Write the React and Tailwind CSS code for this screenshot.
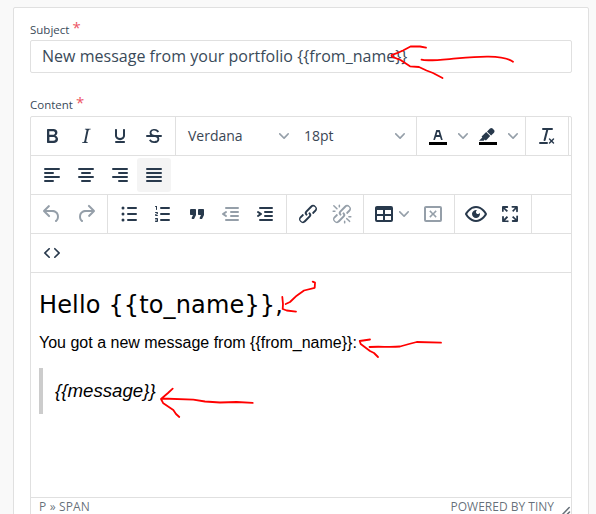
import React from 'react';

const row = (y) => `M5 ${y}h14a1 1 0 010 2H5a1 1 0 010-2z`;
const LINK =
  'M6.2 12.3a1 1 0 011.4 1.4l-2.1 2a2 2 0 102.7 2.8l4.8-4.8a1 1 0 000-1.4 1 1 0 111.4-1.3 2.9 2.9 0 010 4L9.6 20a3.9 3.9 0 01-5.5-5.5l2-2zm11.6-.6a1 1 0 01-1.4-1.4l2-2a2 2 0 10-2.6-2.8L11 10.3a1 1 0 000 1.4A1 1 0 119.6 13a2.9 2.9 0 010-4L14.4 4a3.9 3.9 0 015.5 5.5l-2 2z';
const DENT =
  'M7 5h12a1 1 0 010 2H7a1 1 0 110-2zm5 4h7a1 1 0 010 2h-7a1 1 0 010-2zm0 4h7a1 1 0 010 2h-7a1 1 0 010-2zm-5 4h12a1 1 0 010 2H7a1 1 0 010-2z';

const ICONS = {
  bold: 'M7.8 19c-.3 0-.5 0-.6-.2l-.2-.5V5.7c0-.2 0-.4.2-.5l.6-.2h5c1.5 0 2.7.3 3.5 1 .7.6 1.1 1.4 1.1 2.5a3 3 0 01-.6 1.9c-.4.6-1 1-1.6 1.2.4.1.9.3 1.3.6s.8.7 1 1.2c.4.4.5 1 .5 1.6 0 1.3-.4 2.3-1.3 3-.8.7-2.1 1-3.8 1H7.8zm5-8.3c.6 0 1.2-.1 1.6-.5.4-.3.6-.7.6-1.3 0-1.1-.8-1.7-2.3-1.7H9.3v3.5h3.4zm.5 6c.7 0 1.3-.1 1.7-.4.4-.4.6-.9.6-1.5s-.2-1-.7-1.4c-.4-.3-1-.4-2-.4H9.4v3.8h4z',
  italic:
    'M16.7 4.7l-.1.9h-.3c-.6 0-1 0-1.4.3-.3.3-.4.6-.5 1.1l-2.1 9.8v.6c0 .5.4.8 1.4.8h.2l-.2.8H8l.2-.8h.2c1.1 0 1.8-.5 2-1.5l2-9.8.1-.5c0-.6-.4-.8-1.4-.8h-.3l.2-.9h5.8z',
  underline:
    'M16 5c.6 0 1 .4 1 1v5.5a4 4 0 01-.4 1.8l-1 1.4a5.3 5.3 0 01-5.5 1 5 5 0 01-1.6-1c-.5-.4-.8-.9-1.1-1.4a4 4 0 01-.4-1.8V6c0-.6.4-1 1-1s1 .4 1 1v5.5c0 .3 0 .6.2 1l.6.7a3.3 3.3 0 002.2.8 3.4 3.4 0 002.2-.8c.3-.2.4-.5.6-.8l.2-.9V6c0-.6.4-1 1-1zM8 17h8c.6 0 1 .4 1 1s-.4 1-1 1H8a1 1 0 010-2z',
  strike:
    'M15.6 8.5c-.5-.7-1-1.1-1.3-1.3-.6-.4-1.3-.6-2-.6-2.7 0-2.8 1.7-2.8 2.1 0 1.6 1.8 2 3.2 2.3 4.4.9 4.6 2.8 4.6 3.9 0 1.4-.7 4.1-5 4.1A6.2 6.2 0 017 16.4l1.5-1.1c.4.6 1.6 2 3.7 2 1.6 0 2.5-.4 3-1.2.4-.8.3-2-.8-2.6-.7-.4-1.6-.7-2.9-1-1-.2-3.9-.8-3.9-3.6C7.6 6 10.3 5 12.4 5c2.9 0 4.2 1.6 4.7 2.4l-1.5 1.1z M5 11h14a1 1 0 010 2H5a1 1 0 010-2z',
  alignLeft: `${row(5)}M5 9h8a1 1 0 010 2H5a1 1 0 010-2z${row(13)}M5 17h8a1 1 0 010 2H5a1 1 0 010-2z`,
  alignCenter: `${row(5)}M8 9h8a1 1 0 010 2H8a1 1 0 010-2z${row(13)}M8 17h8a1 1 0 010 2H8a1 1 0 010-2z`,
  alignRight: `${row(5)}M11 9h8a1 1 0 010 2h-8a1 1 0 010-2z${row(13)}M11 17h8a1 1 0 010 2h-8a1 1 0 010-2z`,
  justify: row(5) + row(9) + row(13) + row(17),
  undo: 'M6.4 8H12c3.7 0 6.2 2 6.8 5.1.6 2.7-.4 5.6-2.3 6.8a1 1 0 01-1-1.8c1.1-.6 1.8-2.7 1.4-4.6-.5-2.1-2.1-3.5-4.9-3.5H6.4l3.3 3.3a1 1 0 11-1.4 1.4l-5-5a1 1 0 010-1.4l5-5a1 1 0 011.4 1.4L6.4 8z',
  redo: 'M17.6 10H12c-2.8 0-4.4 1.4-4.9 3.5-.4 2 .3 4 1.4 4.6a1 1 0 11-1 1.8c-2-1.2-2.9-4.1-2.3-6.8.6-3 3-5.1 6.8-5.1h5.6l-3.3-3.3a1 1 0 111.4-1.4l5 5a1 1 0 010 1.4l-5 5a1 1 0 01-1.4-1.4l3.3-3.3z',
  bullets:
    'M11 5h8a1 1 0 010 2h-8a1 1 0 010-2zm0 6h8a1 1 0 010 2h-8a1 1 0 010-2zm0 6h8a1 1 0 010 2h-8a1 1 0 010-2zM4.5 6a1.5 1.5 0 113 0 1.5 1.5 0 01-3 0zm0 6a1.5 1.5 0 113 0 1.5 1.5 0 01-3 0zm0 6a1.5 1.5 0 113 0 1.5 1.5 0 01-3 0z',
  numbers:
    'M10 17h8a1 1 0 010 2h-8a1 1 0 010-2zm0-6h8a1 1 0 010 2h-8a1 1 0 010-2zm0-6h8a1 1 0 010 2h-8a1 1 0 110-2zM6 4v3.5c0 .3-.2.5-.5.5a.5.5 0 01-.5-.5V5h-.5a.5.5 0 010-1H6zm-1 8.8l.2.2h1.3c.3 0 .5.2.5.5s-.2.5-.5.5H4.900a1 1 0 01-.9-1V13c0-.4.3-.8.6-1l1.2-.4.2-.3a.2.2 0 00-.2-.2H4.500a.5.5 0 01-.5-.5c0-.3.2-.5.5-.5h1.600c.5 0 .9.4.9 1v.1c0 .4-.3.8-.6 1l-1.200.4-.2.3zM7 17v2c0 .6-.4 1-1 1H4.500a.5.5 0 010-1h1.200c.2 0 .3-.1.3-.3 0-.2-.1-.3-.3-.3H4.400a.4.4 0 110-.8h1.300c.2 0 .3-.1.3-.3 0-.2-.1-.3-.3-.3H4.500a.5.5 0 110-1H6c.6 0 1 .4 1 1z',
  quote:
    'M7.5 17h.9c.4 0 .7-.2.9-.6L11 13V8c0-.6-.4-1-1-1H6a1 1 0 00-1 1v4c0 .6.4 1 1 1h2l-1.3 2.7a1 1 0 00.8 1.3zm8 0h.9c.4 0 .7-.2.9-.6L19 13V8c0-.6-.4-1-1-1h-4a1 1 0 00-1 1v4c0 .6.4 1 1 1h2l-1.3 2.7a1 1 0 00.8 1.3z',
  outdent: `${DENT}M7.6 13.2a1 1 0 01-1.200 1.600l-3-2a1 1 0 010-1.600l3-2a1 1 0 011.200 1.600L5.800 12l1.800 1.200z`,
  indent: `${DENT}M4.4 13.2L6.2 12l-1.8-1.2a1 1 0 011.2-1.6l3 2a1 1 0 010 1.6l-3 2a1 1 0 11-1.2-1.6z`,
  link: LINK,
  unlink: `${LINK}M7.6 6.3a.8.8 0 01-1 1.1L3.3 4.2a.7.7 0 111-1l3.2 3.1zM5.1 8.6a.8.8 0 010 1.5H3a.8.8 0 010-1.5H5zm5-3.5a.8.8 0 01-1.5 0V3a.8.8 0 011.5 0V5zm6 11.8a.8.8 0 011-1l3.2 3.2a.8.8 0 01-1 1L16 17zm-2.2 2a.8.8 0 011.5 0V21a.8.8 0 01-1.5 0V19zm5-3.5a.7.7 0 110-1.5H21a.8.8 0 010 1.5H19z`,
  table:
    'M19 4a2 2 0 012 2v12a2 2 0 01-2 2H5a2 2 0 01-2-2V6c0-1.1.9-2 2-2h14zM5 14v4h6v-4H5zm14 0h-6v4h6v-4zm0-6h-6v4h6V8zM5 12h6V8H5v4z',
  tableDelete:
    'M19 4a2 2 0 012 2v12a2 2 0 01-2 2H5a2 2 0 01-2-2V6c0-1.1.9-2 2-2h14zm0 2H5v12h14V6zm-4.400 2.300l1.100 1.100L13.100 12l2.600 2.600-1.100 1.100-2.600-2.600-2.600 2.600-1.100-1.100 2.600-2.600-2.600-2.600 1.100-1.100 2.600 2.600 2.600-2.600z',
  preview:
    'M3.5 12.5c.5.8 1.1 1.6 1.8 2.3 2 2 4.2 3.2 6.7 3.2s4.7-1.2 6.7-3.2a16.2 16.2 0 002.1-2.8 15.7 15.7 0 00-2.1-2.8c-2-2-4.2-3.2-6.7-3.2a9.3 9.3 0 00-6.7 3.2A16.2 16.2 0 003.2 12c0 .2.2.3.3.5zm-2.4-1l.7-1.2L4 7.8C6.2 5.4 8.9 4 12 4c3 0 5.8 1.4 8.1 3.8a18.2 18.2 0 012.8 3.7v1l-.7 1.2-2.1 2.5c-2.3 2.4-5 3.8-8.1 3.8-3 0-5.8-1.4-8.1-3.8a18.2 18.2 0 01-2.8-3.7 1 1 0 010-1zm12-3.3a2 2 0 102.7 2.6 4 4 0 11-2.6-2.6z',
  fullscreen:
    'M15.3 10l-1.2-1.3 2.9-3h-2.3a.9.9 0 110-1.7H19c.5 0 .9.4.9.9v4.4a.9.9 0 11-1.8 0V7l-2.9 3zm0 4l3 3v-2.3a.9.9 0 111.7 0V19c0 .5-.4.9-.9.9h-4.4a.9.9 0 110-1.8H17l-3-2.9 1.3-1.2zM10 15.4l-2.9 3h2.3a.9.9 0 110 1.7H5a.9.9 0 01-.9-.9v-4.4a.9.9 0 111.8 0V17l2.9-3 1.2 1.3zM8.7 10L5.7 7v2.3a.9.9 0 01-1.7 0V5c0-.5.4-.9.9-.9h4.4a.9.9 0 010 1.8H7l3 2.9-1.3 1.2z',
  code: 'M9.8 15.7c.3.3.3.8 0 1-.3.4-.9.4-1.2 0l-4.4-4.1a.8.8 0 010-1.2l4.4-4.2c.3-.3.9-.3 1.2 0 .3.3.3.8 0 1.1L6 12l3.8 3.7zM14.2 15.7c-.3.3-.3.8 0 1 .4.4.9.4 1.2 0l4.4-4.1c.3-.3.3-.9 0-1.2l-4.4-4.2a.8.8 0 00-1.2 0c-.3.3-.3.8 0 1.1L18 12l-3.8 3.7z',
  clear:
    'M13.2 6a1 1 0 010 .2l-2.6 10a1 1 0 01-1 .8h-.2a.8.8 0 01-.8-1l2.6-10H8a1 1 0 110-2h9a1 1 0 010 2h-3.8zM5 18h7a1 1 0 010 2H5a1 1 0 010-2zm13 1.5L16.5 18 15 19.5a.7.7 0 01-1-1l1.5-1.5-1.5-1.5a.7.7 0 011-1l1.5 1.5 1.5-1.5a.7.7 0 011 1L17.5 17l1.5 1.5a.7.7 0 01-1 1z',
  textColor:
    'M8.7 16h-.8a.5.5 0 01-.5-.6l2.7-9c.1-.3.3-.4.5-.4h2.8c.2 0 .4.1.5.4l2.7 9a.5.5 0 01-.5.6h-.8a.5.5 0 01-.4-.4l-.7-2.2c0-.3-.3-.4-.5-.4h-3.4c-.2 0-.4.1-.5.4l-.7 2.2c0 .3-.2.4-.4.4zm2.6-7.6l-.6 2a.5.5 0 00.5.6h1.6a.5.5 0 00.5-.6l-.6-2c0-.3-.3-.4-.5-.4h-.4c-.2 0-.4.1-.5.4z',
  highlight:
    'M7.7 16.7H3l3.3-3.3-.7-.8L10.2 8l4 4.1-4 4.2c-.2.2-.6.2-.8 0l-.6-.7-1.1 1.1zm5-7.5L11 7.4l3-2.9a2 2 0 012.6 0L18 6c.7.7.7 2 0 2.7l-2.9 2.9-1.8-1.8-.5-.6z',
};

function Icon({ name, bar }) {
  return (
    <svg width="24" height="24" viewBox="0 0 24 24" className="shrink-0">
      {bar && <path d="M3 18h18v3H3z" fill="#000" />}
      <path d={ICONS[name]} fill="currentColor" fillRule={name === 'strike' ? 'nonzero' : 'evenodd'} />
    </svg>
  );
}

function Chevron() {
  return (
    <svg width="10" height="10" viewBox="0 0 10 10" className="shrink-0 text-[#959fa9]">
      <path
        d="M8.7 2.2c.3-.3.8-.3 1 0 .4.4.4.9 0 1.2L5.7 7.8c-.3.3-.9.3-1.2 0L.2 3.4a.8.8 0 010-1.2c.3-.3.8-.3 1.1 0L5 6l3.7-3.8z"
        fill="currentColor"
      />
    </svg>
  );
}

function Button({ name, disabled, active }) {
  return (
    <div
      className={`flex h-[34px] w-[34px] items-center justify-center rounded-[3px] ${
        disabled ? 'text-[#959fa9]' : 'text-[#28394c]'
      } ${active ? 'bg-[#f4f4f4]' : ''}`}
    >
      <Icon name={name} />
    </div>
  );
}

function ColorButton({ name }) {
  return (
    <div className="flex h-[34px] w-[50px] items-center pl-[5px] text-[#28394c]">
      <Icon name={name} bar />
      <div className="ml-2">
        <Chevron />
      </div>
    </div>
  );
}

function Group({ children, last }) {
  return (
    <div className={`flex h-full px-1 pt-[2px] ${last ? '' : 'border-r border-[#e0e0e0]'}`}>{children}</div>
  );
}

function Toolbar({ children }) {
  return <div className="flex h-[39px] border-b border-[#e0e0e0]">{children}</div>;
}

function Label({ children }) {
  return (
    <div className="flex h-[16px] items-center text-[11.5px] leading-[16px] text-[#3a4a59]">
      <span>{children}</span>
      <span className="-mt-[7px] ml-[3px] text-[15px] leading-[16px] text-[#ed5565]">*</span>
    </div>
  );
}

function Marks() {
  return (
    <svg
      className="pointer-events-none absolute left-0 top-0"
      width="596"
      height="514"
      fill="none"
      stroke="#ff0000"
      strokeWidth="1.8"
      strokeLinecap="round"
      strokeLinejoin="round"
    >
      <path d="M426 47.7L420 46.5H410.5L403 50.5Q397 53.5 392 54.8Q390.500 56 393 57.200L400.500 60L410 66.300L419 67L426.500 70.500L433 73L442.500 78" />
      <path d="M421.500 59.700C427 61.300 436 60.200 456.500 58.400S503 54.500 513 61.700" />
      <path d="M312.700 281.700L315 282.700L314.700 287.800L304 290.500L296.700 295.700L290 302L285.700 304M282.300 297L283 304L282.700 309L286.700 310.500L296 311.700" />
      <path d="M370 339.500L359.700 341L360.700 344L370 351L374 353L378 357M369.500 347C380 346.200 390 347.500 400 346.500L409 344L416.700 342L441 342.700" />
      <path d="M172.700 388.700L168 393L161 399L163.300 403.300L173.300 410L176 414L179.300 417M161.700 398.500L193.300 399.700L205 401.500L220 402.500L236.700 402L252.700 402.900" />
    </svg>
  );
}

export default function App() {
  return (
    <div className="relative h-[514px] w-[596px] overflow-hidden bg-[#f9f9f9] pl-[13px] pt-[7px] font-['Open_Sans',sans-serif]">
      <div className="flex h-[520px] w-[576px] flex-col rounded-[2px] border border-[#e0e0e0] bg-white px-4 pt-[14px]">
        <Label>Subject</Label>
        <div className="mt-[2px] flex h-[33px] w-[542px] items-center rounded-[2px] border border-[#e0e0e0] pb-[2px] pl-[11px] text-[16px] tracking-[0.02px] text-[#3a4a59]">
          <span className="whitespace-nowrap">New message from your portfolio {'{{from_name}}'}</span>
        </div>
        <div className="mt-[24px]">
          <Label>Content</Label>
        </div>
        <div className="mt-[3px] flex h-[402px] w-[542px] flex-col rounded-[2px] border border-[#e0e0e0]">
          <Toolbar>
            <Group>
              <Button name="bold" />
              <Button name="italic" />
              <Button name="underline" />
              <Button name="strike" />
            </Group>
            <Group>
              <div className="flex h-[34px] w-[116px] items-center justify-between pl-2 pr-[7px] text-[14px] text-[#3a4654]">
                <span className="pb-[2px]">Verdana</span>
                <Chevron />
              </div>
              <div className="flex h-[34px] w-[116px] items-center justify-between pl-2 pr-[7px] text-[14px] text-[#3a4654]">
                <span className="pb-[2px]">18pt</span>
                <Chevron />
              </div>
            </Group>
            <Group>
              <ColorButton name="textColor" />
              <ColorButton name="highlight" />
            </Group>
            <Group>
              <Button name="clear" />
            </Group>
          </Toolbar>
          <Toolbar>
            <Group last>
              <Button name="alignLeft" />
              <Button name="alignCenter" />
              <Button name="alignRight" />
              <Button name="justify" active />
            </Group>
          </Toolbar>
          <Toolbar>
            <Group>
              <Button name="undo" disabled />
              <Button name="redo" disabled />
            </Group>
            <Group>
              <Button name="bullets" />
              <Button name="numbers" />
              <Button name="quote" />
              <Button name="outdent" disabled />
              <Button name="indent" />
            </Group>
            <Group>
              <Button name="link" />
              <Button name="unlink" disabled />
            </Group>
            <Group>
              <div className="flex h-[34px] w-[48px] items-center gap-[3px] pl-1 text-[#28394c]">
                <Icon name="table" />
                <Chevron />
              </div>
              <Button name="tableDelete" disabled />
            </Group>
            <Group>
              <Button name="preview" />
              <Button name="fullscreen" />
            </Group>
          </Toolbar>
          <Toolbar>
            <Group last>
              <Button name="code" />
            </Group>
          </Toolbar>
          <div className="flex h-[224px] flex-col px-2 font-['Liberation_Sans',sans-serif] text-black">
            <p className="mt-[14px] whitespace-nowrap font-['DejaVu_Sans',sans-serif] text-[24px] leading-[36px] tracking-[0.15px]">
              Hello {'{{to_name}}'},
            </p>
            <p className="mt-[9px] whitespace-nowrap text-[16px] leading-[22px]">
              You got a new message from {'{{from_name}}'}:
            </p>
            <blockquote className="mt-[14px] flex h-[46px] items-center border-l-4 border-[#cccccc] pl-3 text-[18.67px] italic">
              <span>{'{{message}}'}</span>
            </blockquote>
          </div>
          <div className="flex h-[18px] items-center justify-between border-t border-[#e0e0e0] pl-2 text-[12px] leading-[18px] text-[#222f3e]/70">
            <span className="tracking-[0.15px]">P » SPAN</span>
            <div className="flex items-center">
              <span>POWERED BY TINY</span>
              <svg width="10" height="10" viewBox="0 0 10 10" className="ml-[7px] mt-[8px]">
                <path d="M1 9L8.200 1.500M5 9.500L8.500 6" stroke="#677079" strokeWidth="1.500" strokeLinecap="round" />
              </svg>
            </div>
          </div>
        </div>
      </div>
      <Marks />
    </div>
  );
}
